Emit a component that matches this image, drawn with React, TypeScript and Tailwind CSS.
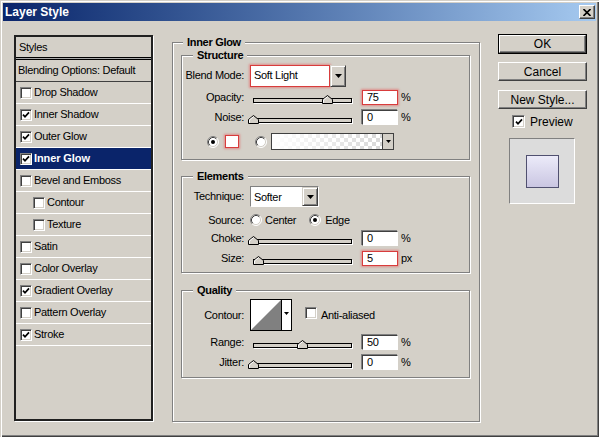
import React from 'react';

const styleItems = [
    { label: 'Drop Shadow', checked: false },
    { label: 'Inner Shadow', checked: true },
    { label: 'Outer Glow', checked: true },
    { label: 'Inner Glow', checked: true, selected: true },
    { label: 'Bevel and Emboss', checked: false },
    { label: 'Contour', checked: false, indent: true },
    { label: 'Texture', checked: false, indent: true },
    { label: 'Satin', checked: false },
    { label: 'Color Overlay', checked: false },
    { label: 'Gradient Overlay', checked: true },
    { label: 'Pattern Overlay', checked: false },
    { label: 'Stroke', checked: true },
];

function Check({ checked, big }: { checked?: boolean; big?: boolean }) {
    return (
        <span
            className={`${big ? 'w-[13px] h-[13px]' : 'w-[12px] h-[12px]'} shrink-0 inline-flex items-center justify-center bg-white border border-t-[#808080] border-l-[#808080] border-r-white border-b-white shadow-[inset_1px_1px_0_#404040,inset_-1px_-1px_0_#d4d0c8]`}
        >
            {checked && (
                <svg width="8" height="8" viewBox="0 0 8 8">
                    <path d="M1 3.6 L3 5.8 L7 1.4" fill="none" stroke="#000" strokeWidth="1.7" />
                </svg>
            )}
        </span>
    );
}

function Radio({ checked }: { checked?: boolean }) {
    return (
        <svg width="12" height="12" viewBox="0 0 12 12" className="shrink-0">
            <circle cx="6" cy="6" r="5" fill="#fff" />
            <path d="M2.11 9.89 A5.5 5.5 0 0 1 9.89 2.11" fill="none" stroke="#808080" />
            <path d="M9.89 2.11 A5.5 5.5 0 0 1 2.11 9.89" fill="none" stroke="#fff" />
            <path d="M2.82 9.18 A4.5 4.5 0 0 1 9.18 2.82" fill="none" stroke="#404040" />
            <path d="M9.18 2.82 A4.5 4.5 0 0 1 2.82 9.18" fill="none" stroke="#d4d0c8" />
            {checked && <circle cx="6" cy="6" r="2" fill="#000" />}
        </svg>
    );
}

function DownArrow({ small }: { small?: boolean }) {
    return small ? (
        <svg width="5" height="3" viewBox="0 0 5 3">
            <path d="M0 0 H5 L2.5 3 Z" fill="#000" />
        </svg>
    ) : (
        <svg width="7" height="4" viewBox="0 0 7 4">
            <path d="M0 0 H7 L3.5 4 Z" fill="#000" />
        </svg>
    );
}

function Slider({ pos }: { pos: number }) {
    return (
        <div className="relative ml-[4px] w-[109px] h-[15px] pl-[5px] pt-[8px] shrink-0">
            <div className="w-[99px] h-[5px] border border-black bg-[#d4d0c8] shadow-[1px_1px_0_#fff]" />
            <svg width="11" height="9" viewBox="0 0 11 9" className="absolute top-[5px]" style={{ left: pos - 0.5 }}>
                <path d="M0.5 8.5 V4.5 L5.5 0.5 L10.5 4.5 V8.5 Z" fill="#d4d0c8" stroke="#000" />
                <path d="M1.5 7.8 V4.9 L5.5 1.7" fill="none" stroke="#fff" />
            </svg>
        </div>
    );
}

function NumField({ value, focus }: { value: string; focus?: boolean }) {
    return (
        <div
            className={`ml-[5px] w-[36px] h-[15px] shrink-0 bg-white pl-[4px] leading-[13px] border ${
                focus
                    ? 'border-[#d83c3c] shadow-[0_0_2px_1px_rgba(230,90,90,0.55)]'
                    : 'border-t-[#404040] border-l-[#404040] border-r-white border-b-white shadow-[-1px_-1px_0_#808080]'
            }`}
        >
            {value}
        </div>
    );
}

function Label({ children }: { children: React.ReactNode }) {
    return <span className="w-[62px] shrink-0 text-right whitespace-nowrap">{children}</span>;
}

function Group({ label, className, children }: { label: string; className: string; children: React.ReactNode }) {
    return (
        <div className={`relative w-[289px] flex flex-col border border-[#808080] shadow-[inset_1px_1px_0_#fff,1px_1px_0_#fff] ${className}`}>
            <span className="absolute -top-[8px] left-[11px] px-[4px] bg-[#d4d0c8] font-bold leading-[14px]">{label}</span>
            {children}
        </div>
    );
}

function ArrowButton({ className }: { className: string }) {
    return (
        <div
            className={`${className} flex items-center justify-center bg-[#d4d0c8] border border-t-[#d4d0c8] border-l-[#d4d0c8] border-r-[#404040] border-b-[#404040] shadow-[inset_1px_1px_0_#fff,inset_-1px_-1px_0_#808080]`}
        >
            <DownArrow />
        </div>
    );
}

function Button({ children, isDefault, className }: { children: React.ReactNode; isDefault?: boolean; className?: string }) {
    const inner = (
        <div className="h-full flex items-center justify-center bg-[#d4d0c8] border border-t-white border-l-white border-r-[#404040] border-b-[#404040] shadow-[inset_-1px_-1px_0_#808080]">
            {children}
        </div>
    );
    return isDefault ? (
        <div className={`h-[20px] border border-black ${className ?? ''}`}>{inner}</div>
    ) : (
        <div className={`h-[19px] ${className ?? ''}`}>{inner}</div>
    );
}

export default function App() {
    return (
        <div className="w-[599px] h-[437px] overflow-hidden flex flex-col px-[3px] pt-[3px] bg-[#d4d0c8] text-black text-[11px] tracking-[-0.3px] font-['Liberation_Sans',Arial,sans-serif] shadow-[inset_1px_1px_0_#d4d0c8,inset_2px_2px_0_#fff,inset_-1px_-1px_0_#404040,inset_-2px_-2px_0_#808080]">
            {/* title bar */}
            <div className="h-[18px] shrink-0 flex items-center justify-between pl-[2px] pr-[1px] bg-linear-to-r from-[#0a246a] to-[#a6caf0]">
                <span className="text-white font-bold text-[12px] tracking-normal">Layer Style</span>
                <div className="w-[16px] h-[14px] flex items-center justify-center bg-[#d4d0c8] border border-t-white border-l-white border-r-[#404040] border-b-[#404040] shadow-[inset_-1px_-1px_0_#808080]">
                    <svg width="8" height="7" viewBox="0 0 8 7">
                        <path d="M0.5 0 L7.5 7 M7.5 0 L0.5 7" stroke="#000" strokeWidth="1.6" />
                    </svg>
                </div>
            </div>

            <div className="flex flex-1">
                {/* styles list */}
                <div className="ml-[11px] mt-[14px] w-[139px] h-[386px] flex flex-col border-2 border-[#202020] shadow-[1px_1px_0_#fff]">
                    <div className="h-[20px] flex items-center pl-[3px]">Styles</div>
                    <div className="h-[3px] border-y border-black bg-[#a8a8a8]" />
                    <div className="h-[22px] flex items-center pl-[2px] border-b border-[#404040]">Blending Options: Default</div>
                    {styleItems.map((it) => (
                        <div
                            key={it.label}
                            className={`h-[22px] flex items-center border-b border-white ${it.indent ? 'pl-[17px]' : 'pl-[4px]'} ${
                                it.selected ? 'bg-[#0a246a] text-white font-bold tracking-[-0.1px]' : ''
                            }`}
                        >
                            <Check checked={it.checked} />
                            <span className="ml-[2px]">{it.label}</span>
                        </div>
                    ))}
                </div>

                {/* settings */}
                <div className="relative ml-[19px] mt-[21px] w-[308px] h-[380px] flex flex-col pt-[12px] pl-[8px] border border-[#808080] shadow-[inset_1px_1px_0_#fff,1px_1px_0_#fff]">
                    <span className="absolute -top-[8px] left-[10px] px-[4px] bg-[#d4d0c8] font-bold leading-[14px]">Inner Glow</span>

                    <Group label="Structure" className="h-[105px]">
                        <div className="flex items-center mt-[9px] h-[21px]">
                            <Label>Blend Mode:</Label>
                            <div className="ml-[6px] flex h-[22px]">
                                <div className="w-[80px] flex items-center bg-white pl-[3px] border border-[#d83c3c] shadow-[0_0_2px_1px_rgba(230,90,90,0.55)]">
                                    Soft Light
                                </div>
                                <ArrowButton className="w-[16px] h-[22px]" />
                            </div>
                        </div>
                        <div className="flex items-center mt-[4px] h-[15px]">
                            <Label>Opacity:</Label>
                            <Slider pos={74} />
                            <NumField value="75" focus />
                            <span className="ml-[3px]">%</span>
                        </div>
                        <div className="flex items-center mt-[5px] h-[15px]">
                            <Label>Noise:</Label>
                            <Slider pos={0} />
                            <NumField value="0" />
                            <span className="ml-[3px]">%</span>
                        </div>
                        <div className="flex items-center mt-[8px] h-[17px]">
                            <span className="ml-[25px]">
                                <Radio checked />
                            </span>
                            <div className="ml-[6px] w-[14px] h-[13px] bg-white border border-[#d83c3c] shadow-[0_0_2px_1px_rgba(230,90,90,0.55)]" />
                            <span className="ml-[16px]">
                                <Radio />
                            </span>
                            <div className="ml-[4px] flex h-[17px] border border-[#404040]">
                                <div className="w-[110px] bg-[repeating-conic-gradient(#d8d8d8_0%_25%,#ffffff_0%_50%)] bg-[length:8px_8px]">
                                    <div className="w-full h-full bg-linear-to-r from-white to-transparent" />
                                </div>
                                <div className="w-[11px] flex items-center justify-center bg-[#d4d0c8] border-l border-[#404040]">
                                    <DownArrow small />
                                </div>
                            </div>
                        </div>
                    </Group>

                    <Group label="Elements" className="h-[97px] mt-[16px]">
                        <div className="flex items-center mt-[9px] h-[21px]">
                            <Label>Technique:</Label>
                            <div className="ml-[6px] flex h-[21px] border border-t-[#808080] border-l-[#808080] border-r-white border-b-white shadow-[inset_1px_1px_0_#404040]">
                                <div className="w-[51px] flex items-center bg-white pl-[3px] pt-[1px]">Softer</div>
                                <ArrowButton className="w-[16px] h-full" />
                            </div>
                        </div>
                        <div className="flex items-center mt-[6px] h-[14px]">
                            <Label>Source:</Label>
                            <span className="ml-[6px]">
                                <Radio />
                            </span>
                            <span className="ml-[3px]">Center</span>
                            <span className="ml-[13px]">
                                <Radio checked />
                            </span>
                            <span className="ml-[4px]">Edge</span>
                        </div>
                        <div className="flex items-center mt-[4px] h-[15px]">
                            <Label>Choke:</Label>
                            <Slider pos={0} />
                            <NumField value="0" />
                            <span className="ml-[3px]">%</span>
                        </div>
                        <div className="flex items-center mt-[5px] h-[15px]">
                            <Label>Size:</Label>
                            <Slider pos={5} />
                            <NumField value="5" focus />
                            <span className="ml-[3px]">px</span>
                        </div>
                    </Group>

                    <Group label="Quality" className="h-[88px] mt-[17px]">
                        <div className="flex items-center mt-[8px] h-[32px]">
                            <Label>Contour:</Label>
                            <div className="ml-[6px] flex h-[32px] border border-black">
                                <svg width="30" height="30" viewBox="0 0 30 30">
                                    <rect width="30" height="30" fill="#fff" />
                                    <path d="M0 30 L30 0 V30 Z" fill="#808080" />
                                </svg>
                                <div className="w-[10px] flex items-start justify-center pt-[12px] bg-white border-l border-black">
                                    <DownArrow small />
                                </div>
                            </div>
                            <span className="ml-[13px]">
                                <Check />
                            </span>
                            <span className="ml-[4px]">Anti-aliased</span>
                        </div>
                        <div className="flex items-center mt-[4px] h-[15px]">
                            <Label>Range:</Label>
                            <Slider pos={49} />
                            <NumField value="50" />
                            <span className="ml-[3px]">%</span>
                        </div>
                        <div className="flex items-center mt-[5px] h-[15px]">
                            <Label>Jitter:</Label>
                            <Slider pos={0} />
                            <NumField value="0" />
                            <span className="ml-[3px]">%</span>
                        </div>
                    </Group>
                </div>

                {/* buttons */}
                <div className="ml-[18px] mt-[13px] w-[89px] flex flex-col text-[12px] tracking-normal">
                    <Button isDefault>OK</Button>
                    <Button className="mt-[8px]">Cancel</Button>
                    <Button className="mt-[9px]">New Style...</Button>
                    <div className="mt-[6px] ml-[14px] h-[13px] flex items-center">
                        <Check checked big />
                        <span className="ml-[5px]">Preview</span>
                    </div>
                    <div className="mt-[10px] ml-[11px] w-[66px] h-[66px] flex items-center justify-center bg-[#dcdcdc] border border-t-[#808080] border-l-[#808080] border-r-white border-b-white">
                        <div className="w-[33px] h-[33px] border border-[#505070] bg-linear-to-b from-[#ecebf9] to-[#cac6e2]" />
                    </div>
                </div>
            </div>
        </div>
    );
}
